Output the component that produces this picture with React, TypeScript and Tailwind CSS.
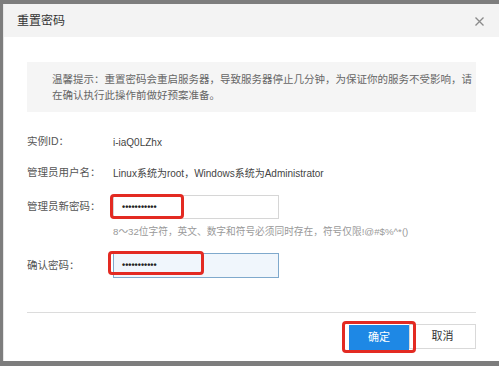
const font = { fontFamily: '"Liberation Sans", "Noto Sans CJK SC", sans-serif' };

const Redbox = ({ className }: { className: string }) => (
  <div className={`pointer-events-none absolute rounded-[4px] border-[3px] border-[#e32a22] ${className}`} />
);

const Dots = () => (
  <span className="text-[9px] leading-none font-bold text-[#222]">•••••••••••</span>
);

export default function App() {
  return (
    <div
      className="flex h-[366px] w-[499px] overflow-hidden bg-[#7d7d7d] pt-[4px] pb-[5px] pl-[3px]"
      style={font}
    >
      <div className="flex flex-1 flex-col border-l border-[#e6e6e6] bg-white">
        {/* header */}
        <div className="flex h-[33px] shrink-0 items-center justify-between bg-[#f3f3f3] pl-[13px] pr-[15px]">
          <span className="text-[12px] text-[#333]">重置密码</span>
          <svg width="9" height="9" viewBox="0 0 9 9" className="mt-[1px]">
            <path d="M0.5 0.5L8.5 8.5M8.5 0.5L0.5 8.5" stroke="#8a8a8a" strokeWidth="1.3" />
          </svg>
        </div>

        <div className="flex flex-1 flex-col px-[23px]">
          {/* notice */}
          <div className="mt-[25px] h-[50px] bg-[#f5f5f5] pl-[25px] pt-[9px] text-[10.5px] leading-[16px] text-[#666]">
            温馨提示：重置密码会重启服务器，导致服务器停止几分钟，为保证你的服务不受影响，请
            <br />
            在确认执行此操作前做好预案准备。
          </div>

          {/* form */}
          <div className="text-[10.5px] text-[#555]">
            <div className="mt-[20px] flex h-[20px] items-center">
              <span className="w-[86px]">实例ID：</span>
              <span className="text-[10px] text-[#444]">i-iaQ0LZhx</span>
            </div>
            <div className="mt-[11px] flex h-[20px] items-center">
              <span className="w-[86px]">管理员用户名：</span>
              <span className="text-[10px] text-[#444]">Linux系统为root，Windows系统为Administrator</span>
            </div>
            <div className="mt-[12px] flex items-center">
              <span className="w-[86px]">管理员新密码：</span>
              <div className="relative flex h-[24px] w-[166px] items-center border border-[#d6d6d6] bg-white pl-[8px]">
                <Dots />
                <Redbox className="-left-[4px] -top-[2px] h-[25px] w-[74px]" />
              </div>
            </div>
            <div className="mt-[5px] h-[16px] pl-[86px] text-[9.7px] leading-[16px] text-[#999]">
              8～32位字符，英文、数字和符号必须同时存在，符号仅限!@#$%^*()
            </div>
            <div className="mt-[13px] flex items-center">
              <span className="w-[86px]">确认密码：</span>
              <div className="relative flex h-[25px] w-[166px] items-center border border-[#7fa9cc] bg-[#f0f6fc] pl-[8px]">
                <Dots />
                <Redbox className="-left-[6px] -top-[3px] h-[24px] w-[96px]" />
              </div>
            </div>
          </div>

          {/* footer */}
          <div className="mt-[34px] h-px bg-[#dcdcdc]" />
          <div className="mt-[11px] flex justify-end">
            <div className="relative">
              <button className="h-[25px] w-[60px] bg-[#1e88e5] text-[11px] text-white">确定</button>
              <Redbox className="-left-[7px] -top-[3px] h-[32px] w-[74px]" />
            </div>
            <button className="h-[25px] w-[67px] border border-[#d9d9d9] bg-white text-[11px] text-[#333]">
              取消
            </button>
          </div>
        </div>
      </div>
    </div>
  );
}
